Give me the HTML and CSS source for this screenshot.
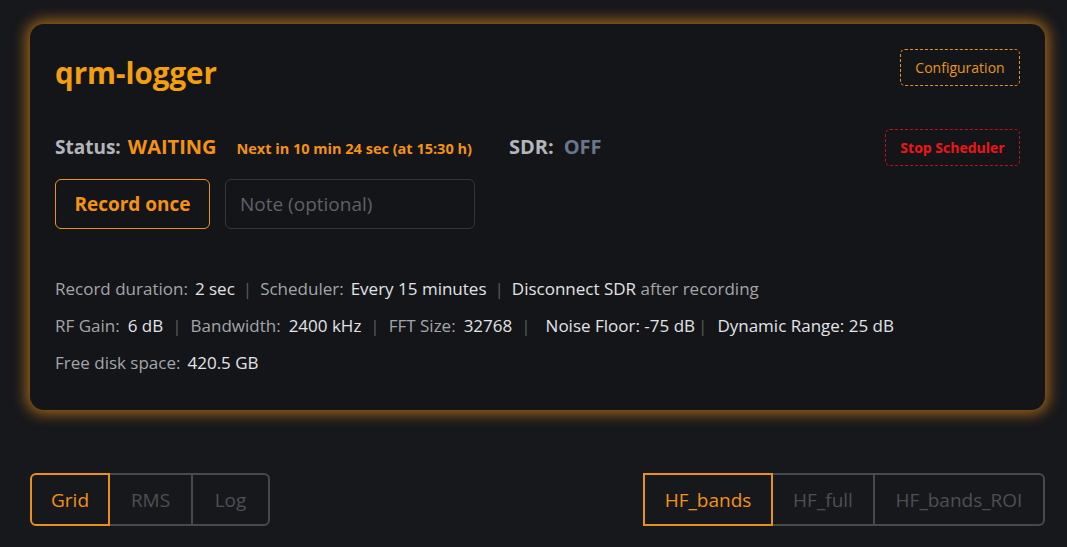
FILE: index.html
```html
<!DOCTYPE html>
<html>
<head>
<meta charset="utf-8">
<link rel="stylesheet" href="styles.css">
</head>
<body>
<div class="page">
  <section class="card">
    <div class="head">
      <h1 class="title">qrm-logger</h1>
      <button class="btn-config">Configuration</button>
    </div>
    <div class="status-row">
      <div class="status">
        <span class="lbl first">Status:</span>
        <span class="waiting">WAITING</span>
        <span class="next">Next in 10 min 24 sec (at 15:30 h)</span>
        <span class="lbl sdr">SDR:</span>
        <span class="off">OFF</span>
      </div>
      <button class="btn-stop">Stop Scheduler</button>
    </div>
    <div class="actions">
      <button class="btn-record">Record once</button>
      <input class="note" type="text" placeholder="Note (optional)">
    </div>
    <div class="info">
      <div class="line"><span class="k">Record duration:</span><span class="v">2 sec</span><span class="sep">|</span><span class="k">Scheduler:</span><span class="v">Every 15 minutes</span><span class="sep">|</span><span class="v">Disconnect SDR</span> <span class="k">after recording</span></div>
      <div class="line l2"><span class="k">RF Gain:</span><span class="v">6 dB</span><span class="sep">|</span><span class="k">Bandwidth:</span><span class="v">2400 kHz</span><span class="sep">|</span><span class="k">FFT Size:</span><span class="v">32768</span><span class="sep wide">|</span><span class="v">Noise Floor: -75 dB</span><span class="sep tight">|</span><span class="v">Dynamic Range: 25 dB</span></div>
      <div class="line"><span class="k">Free disk space:</span><span class="v">420.5 GB</span></div>
    </div>
  </section>
  <div class="tabs-row">
    <div class="seg">
      <button class="seg-item active w-grid">Grid</button>
      <button class="seg-item w-rms">RMS</button>
      <button class="seg-item w-log">Log</button>
    </div>
    <div class="seg">
      <button class="seg-item active w-hfb">HF_bands</button>
      <button class="seg-item w-hff">HF_full</button>
      <button class="seg-item w-roi">HF_bands_ROI</button>
    </div>
  </div>
</div>
</body>
</html>
```

FILE: styles.css
```css
* { box-sizing: border-box; }
html, body { margin: 0; padding: 0; }
body {
  background: #17181c;
  font-family: "Open Sans", "Noto Sans", sans-serif;
  color: #d8d8d8;
  width: 1067px;
  height: 547px;
  overflow: hidden;
}
.page {
  padding: 24px 22px 0 30px;
}
.card {
  width: 1015px;
  height: 386px;
  background: #141519;
  border-radius: 14px;
  box-shadow: 0 0 14px 4px rgba(243, 146, 20, 0.6);
  padding: 0 25px 0 25px;
}
.head {
  display: flex;
  justify-content: space-between;
  align-items: flex-start;
  padding-top: 25px;
  height: 90px;
}
.title {
  margin: 5px 0 0 0;
  font-size: 29.5px;
  font-weight: 700;
  color: #f4a00e;
  line-height: 38px;
}
button { font-family: inherit; cursor: pointer; }
.btn-config {
  width: 120px;
  height: 37px;
  background: transparent;
  border: 1px dashed #e8901c;
  border-radius: 5px;
  color: #e8951e;
  font-size: 14px;
  padding: 0;
}
.status-row {
  display: flex;
  justify-content: space-between;
  align-items: center;
  height: 54px;
  margin-top: 5px;
}
.status { display: flex; align-items: baseline; }
.lbl { font-weight: 700; font-size: 20px; color: #b3b5ba; margin-right: 10px; }
.lbl.first { font-size: 19px; margin-right: 7px; }
.waiting { font-weight: 700; font-size: 20px; color: #f39214; margin-right: 20px; }
.next { font-weight: 700; font-size: 14.5px; color: #f39214; margin-right: 37px; }
.off { font-weight: 700; font-size: 20px; color: #6a7689; }
.btn-stop {
  width: 135px;
  height: 37px;
  background: transparent;
  border: 1px dashed #c0101e;
  border-radius: 5px;
  color: #f01515;
  font-size: 14px;
  font-weight: 700;
  padding: 0;
  margin-top: 2px;
}
.actions { display: flex; gap: 15px; margin-top: 6px; }
.btn-record {
  width: 155px;
  height: 50px;
  background: transparent;
  border: 1px solid #f0901a;
  border-radius: 6px;
  color: #f39214;
  font-size: 19px;
  font-weight: 700;
  padding: 0;
}
.note {
  width: 250px;
  height: 50px;
  background: #141519;
  border: 1px solid #34363b;
  border-radius: 6px;
  padding: 0 14px;
  font-family: inherit;
  font-size: 19px;
  color: #ddd;
  outline: none;
}
.note::placeholder { color: #5f6166; }
.info { margin-top: 43px; }
.line {
  font-size: 17px;
  height: 37px;
  line-height: 34px;
  white-space: nowrap;
}
.k { color: #a3a5a9; }
.v { color: #e2e3e5; }
.k + .v { margin-left: 7px; }
.sep { color: #5a5c60; margin: 0 8px; }
.l2 .k + .v { margin-left: 8px; }
.l2 .sep { margin: 0 9px; }
.l2 .sep.wide { margin: 0 15px 0 9px; }
.l2 .sep.tight { margin: 0 10px 0 3px; }
.tabs-row {
  display: flex;
  justify-content: space-between;
  margin-top: 63px;
}
.seg { display: flex; }
.seg-item {
  height: 53px;
  background: transparent;
  border: 2px solid #47494d;
  color: #4d4f54;
  font-size: 19px;
  padding: 0;
  margin-left: -2px;
}
.seg-item:first-child { border-radius: 6px 0 0 6px; margin-left: 0; }
.seg-item:last-child { border-radius: 0 6px 6px 0; }
.seg-item.active { border-color: #e8901c; color: #f39214; position: relative; z-index: 1; }
.seg:last-child .seg-item.active { border-radius: 0; }
.w-grid { width: 80px; }
.w-rms { width: 85px; }
.w-log { width: 79px; }
.w-hfb { width: 130px; }
.w-hff { width: 104px; }
.w-roi { width: 172px; }
```
